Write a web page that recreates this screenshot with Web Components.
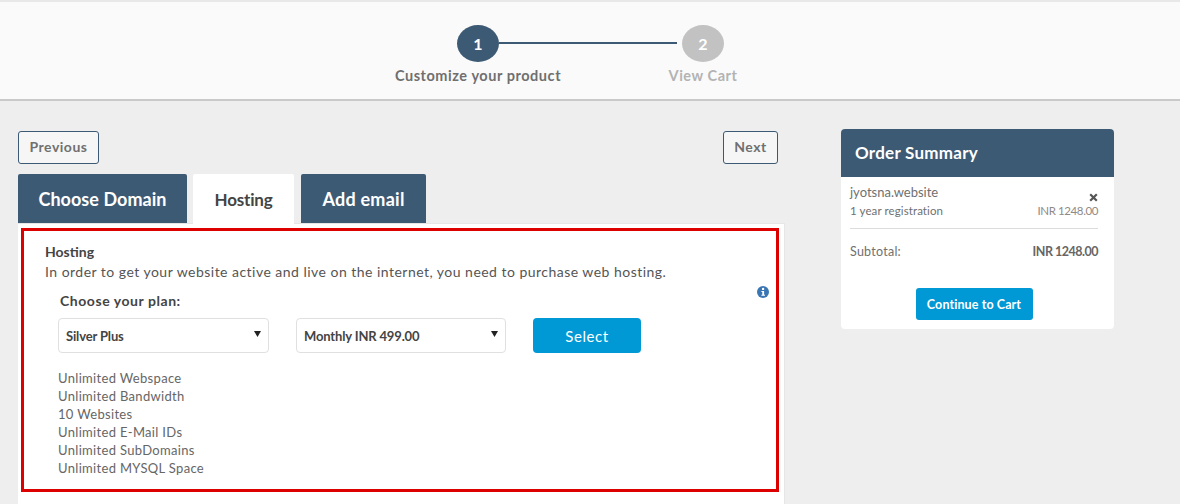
<!DOCTYPE html>
<html>
<head>
<meta charset="utf-8">
<title>Hosting</title>
<style>
    html, body { margin: 0; padding: 0; }
    body {
        width: 1180px;
        height: 504px;
        overflow: hidden;
        background: #eeeeee;
        color: #555;
        font-family: "Lato", "Liberation Sans", sans-serif;
    }
</style>
</head>
<body>
<step-bar></step-bar>
<page-main>
    <div slot="left">
        <nav-buttons></nav-buttons>
        <tab-strip></tab-strip>
        <hosting-panel></hosting-panel>
    </div>
    <order-summary slot="right"></order-summary>
</page-main>

<script>
const FONT = '"Lato", "Liberation Sans", sans-serif';

class StepBar extends HTMLElement {
    constructor() {
        super();
        this.attachShadow({ mode: 'open' });
        this.shadowRoot.innerHTML = `
            <style>
            :host {
                display: block;
                height: 97px;
                box-sizing: content-box;
                background: #fafafa;
                border-top: 2px solid #e8e8e8;
                border-bottom: 2px solid #c9c9c9;
                font-family: ${FONT};
            }
            .steps {
                display: grid;
                grid-template-columns: 225px 225px;
                justify-content: center;
                padding-top: 23px;
                margin-left: 1px;
            }
            .step {
                display: flex;
                flex-direction: column;
                align-items: center;
                position: relative;
            }
            .dot {
                width: 42px;
                height: 37px;
                border-radius: 50%;
                background: #3d5a75;
                color: #fff;
                font-weight: 700;
                font-size: 16px;
                display: flex;
                align-items: center;
                justify-content: center;
                z-index: 1;
            }
            .off .dot { background: #c2c2c2; }
            .label {
                margin-top: 5px;
                font-size: 14.5px;
                line-height: 18px;
                font-weight: 700;
                letter-spacing: 0.55px;
                color: #6f6f6f;
                white-space: nowrap;
            }
            .off .label { color: #b3b3b3; }
            .line {
                position: absolute;
                left: 133px;
                top: 17px;
                width: 178px;
                height: 2px;
                background: #3d5a75;
            }
            </style>
            <div class="steps">
                <div class="step"><span class="line"></span><span class="dot">1</span><span class="label">Customize your product</span></div>
                <div class="step off"><span class="dot">2</span><span class="label">View Cart</span></div>
            </div>
        `;
    }
}

class PageMain extends HTMLElement {
    constructor() {
        super();
        this.attachShadow({ mode: 'open' });
        this.shadowRoot.innerHTML = `
            <style>
            :host {
                display: flex;
                align-items: flex-start;
                padding-left: 18px;
                gap: 57px;
            }
            ::slotted([slot="left"]) { width: 766px; padding-top: 30px; }
            ::slotted([slot="right"]) { margin-top: 28px; }
            </style>
            <slot name="left"></slot>
            <slot name="right"></slot>
        `;
    }
}

class NavButtons extends HTMLElement {
    constructor() {
        super();
        this.attachShadow({ mode: 'open' });
        this.shadowRoot.innerHTML = `
            <style>
            :host {
                display: flex;
                justify-content: space-between;
                width: 760px;
                font-family: ${FONT};
            }
            span {
                box-sizing: border-box;
                height: 33px;
                padding-bottom: 2px;
                display: flex;
                align-items: center;
                justify-content: center;
                border: 1px solid #3d5a75;
                border-radius: 3px;
                background: #f6f6f6;
                color: #707070;
                font-size: 14px;
                font-weight: 700;
                letter-spacing: 0.5px;
            }
            .prev { width: 81px; }
            .next { width: 55px; }
            </style>
            <span class="prev">Previous</span>
            <span class="next">Next</span>
        `;
    }
}

class TabStrip extends HTMLElement {
    constructor() {
        super();
        this.attachShadow({ mode: 'open' });
        this.shadowRoot.innerHTML = `
            <style>
            :host {
                display: flex;
                margin-top: 10px;
                height: 49px;
                font-family: ${FONT};
            }
            .tab {
                box-sizing: border-box;
                height: 49px;
                display: flex;
                align-items: center;
                justify-content: center;
                background: #3d5a75;
                color: #fff;
                font-size: 18px;
                font-weight: 700;
                letter-spacing: 0.05px;
                border-radius: 2px 2px 0 0;
            }
            .a { width: 169px; margin-right: 6px; }
            .b { width: 101px; margin-right: 7px; background: #fff; color: #444; font-size: 17px; letter-spacing: -0.2px; height: 50px; }
            .c { width: 125px; letter-spacing: 0.25px; }
            </style>
            <div class="tab a">Choose Domain</div>
            <div class="tab b">Hosting</div>
            <div class="tab c">Add email</div>
        `;
    }
}

class PlanSelect extends HTMLElement {
    constructor() {
        super();
        this.attachShadow({ mode: 'open' });
        this.shadowRoot.innerHTML = `
            <style>
            :host {
                box-sizing: border-box;
                display: flex;
                align-items: center;
                justify-content: space-between;
                height: 35px;
                padding: 1px 7px 0 7px;
                background: #fff;
                border: 1px solid #e0e0e0;
                border-radius: 4px;
                color: #444;
                font-size: 13px;
                font-weight: 700;
                letter-spacing: -0.15px;
            }
            svg { display: block; margin-top: -6px; }
            </style>
            <slot></slot>
            <svg width="7" height="7" viewBox="0 0 7 7"><path d="M0 1h7L3.5 7z" fill="#222"/></svg>
        `;
    }
}

class HostingPanel extends HTMLElement {
    constructor() {
        super();
        this.attachShadow({ mode: 'open' });
        this.shadowRoot.innerHTML = `
            <style>
            :host {
                display: block;
                box-sizing: border-box;
                width: 767px;
                height: 281px;
                background: #fff;
                border-top: 1px solid #e6e6e6;
                border-right: 1px solid #e6e6e6;
                padding: 4px 5px 0 3px;
                font-family: ${FONT};
            }
            .frame {
                box-sizing: border-box;
                width: 758px;
                height: 264px;
                border: 3px solid #dc0000;
                padding: 12px 0 0 21px;
                position: relative;
            }
            h3 {
                margin: 0;
                font-size: 14px;
                line-height: 18px;
                font-weight: 700;
                color: #444;
            }
            p {
                margin: 2px 0 0;
                font-size: 14px;
                line-height: 18px;
                color: #555;
                letter-spacing: 0.475px;
            }
            .choose {
                margin: 11px 0 0 15px;
                font-size: 14px;
                line-height: 18px;
                font-weight: 700;
                color: #444;
                letter-spacing: 0.55px;
            }
            .row {
                display: flex;
                margin: 8px 0 0 13px;
            }
            .row plan-select:nth-child(1) { width: 211px; margin-right: 27px; }
            .row plan-select:nth-child(2) { width: 210px; margin-right: 27px; }
            .select {
                width: 108px;
                height: 35px;
                display: flex;
                align-items: center;
                justify-content: center;
                background: #0099d5;
                color: #fff;
                border-radius: 4px;
                font-size: 15px;
                letter-spacing: 0.6px;
            }
            ul {
                list-style: none;
                margin: 16px 0 0 13px;
                padding: 0;
                font-size: 13px;
                line-height: 18px;
                color: #666;
                letter-spacing: 0.32px;
            }
            .info {
                position: absolute;
                left: 733px;
                top: 55px;
            }
            </style>
            <div class="frame">
                <h3>Hosting</h3>
                <p>In order to get your website active and live on the internet, you need to purchase web hosting.</p>
                <div class="choose">Choose your plan:</div>
                <div class="row">
                    <plan-select>Silver Plus</plan-select>
                    <plan-select>Monthly INR 499.00</plan-select>
                    <div class="select">Select</div>
                </div>
                <ul>
                    <li>Unlimited Webspace</li>
                    <li>Unlimited Bandwidth</li>
                    <li>10 Websites</li>
                    <li>Unlimited E-Mail IDs</li>
                    <li>Unlimited SubDomains</li>
                    <li>Unlimited MYSQL Space</li>
                </ul>
                <svg class="info" width="12" height="12" viewBox="0 0 12 12">
                    <circle cx="6" cy="6" r="6" fill="#3a76b4"/>
                    <circle cx="6.1" cy="2.9" r="1.2" fill="#fff"/>
                    <path d="M4.4 4.9h2.7v3.8h.9v1.1H4.4V8.7h.9V6H4.4z" fill="#fff"/>
                </svg>
            </div>
        `;
    }
}

class OrderSummary extends HTMLElement {
    constructor() {
        super();
        this.attachShadow({ mode: 'open' });
        this.shadowRoot.innerHTML = `
            <style>
            :host {
                display: block;
                box-sizing: border-box;
                width: 273px;
                height: 200px;
                background: #fff;
                border-radius: 4px;
                overflow: hidden;
                font-family: ${FONT};
            }
            header {
                box-sizing: border-box;
                height: 48px;
                padding: 0 0 2px 14px;
                display: flex;
                align-items: center;
                background: #3d5a75;
                color: #fff;
                font-size: 17px;
                font-weight: 700;
                letter-spacing: 0.25px;
            }
            .body { padding: 6px 16px 0 9px; }
            .line {
                display: flex;
                justify-content: space-between;
                align-items: flex-end;
                color: #707070;
            }
            .domain { font-size: 13px; line-height: 18px; letter-spacing: 0; }
            .domain svg { display: block; margin: 0 0 -1px; }
            .reg { margin-top: 1px; padding-bottom: 8px; border-bottom: 1px solid #dcdcdc; font-size: 11.5px; line-height: 18px; letter-spacing: 0.1px; }
            .reg .price { color: #8f8a86; letter-spacing: -0.4px; }
            .sub { margin-top: 14px; font-size: 12.5px; line-height: 18px; letter-spacing: 0.25px; }
            .sub b { color: #666; letter-spacing: -0.5px; }
            .cta {
                display: flex;
                justify-content: center;
                margin-top: 27px;
            }
            .cta span {
                width: 117px;
                height: 32px;
                display: flex;
                align-items: center;
                justify-content: center;
                background: #0099d5;
                color: #fff;
                border-radius: 3px;
                font-size: 12.5px;
                font-weight: 700;
                letter-spacing: 0.1px;
            }
            </style>
            <header>Order Summary</header>
            <div class="body">
                <div class="line domain">
                    <span>jyotsna.website</span>
                    <svg width="9" height="9" viewBox="0 0 9 9"><path d="M1.2 1.2l6.6 6.6M7.8 1.2L1.2 7.8" stroke="#555" stroke-width="2.2" fill="none"/></svg>
                </div>
                <div class="line reg"><span>1 year registration</span><span class="price">INR 1248.00</span></div>
                <div class="line sub"><span>Subtotal:</span><b>INR 1248.00</b></div>
                <div class="cta"><span>Continue to Cart</span></div>
            </div>
        `;
    }
}

customElements.define('step-bar', StepBar);
customElements.define('page-main', PageMain);
customElements.define('nav-buttons', NavButtons);
customElements.define('tab-strip', TabStrip);
customElements.define('plan-select', PlanSelect);
customElements.define('hosting-panel', HostingPanel);
customElements.define('order-summary', OrderSummary);
</script>
</body>
</html>
